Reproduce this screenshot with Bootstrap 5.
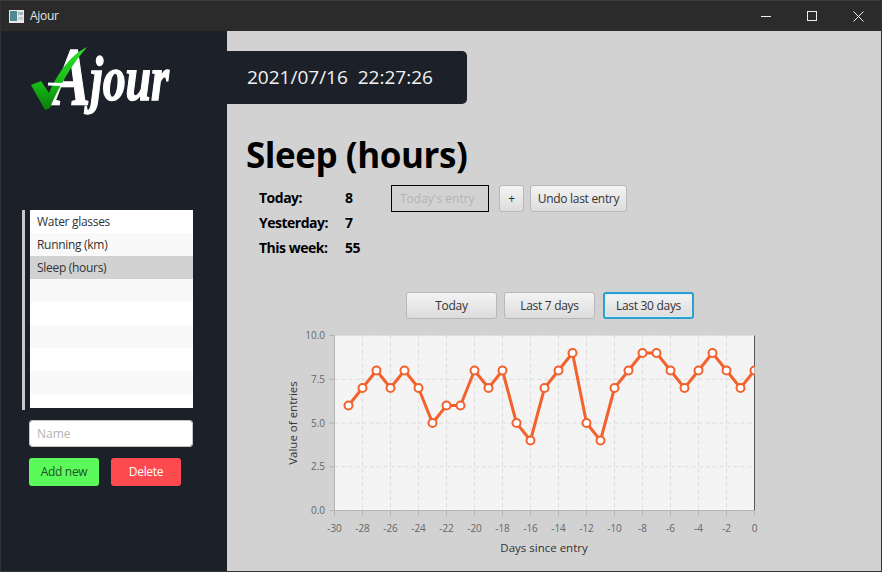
<!DOCTYPE html>
<html lang="en">
<head>
  <meta charset="UTF-8">
  <title>Ajour</title>
  <meta name="viewport" content="width=device-width, initial-scale=1">
  <link href="https://cdn.jsdelivr.net/npm/bootstrap@5.3.3/dist/css/bootstrap.min.css" rel="stylesheet">
  <style>
    html, body {
      height: 100%;
      overflow: hidden;
    }
    body {
      background-color: #d2d2d2;
      font-family: "Open Sans", "Noto Sans", sans-serif;
      font-size: 12px;
      letter-spacing: -0.3px;
      color: #333;
    }
    .app-frame {
      height: 572px;
      width: 882px;
      border: 1px solid #333;
      border-top-color: #3c3c3c;
    }
    .title-bar {
      height: 30px;
      background-color: #2b2b2b;
      color: #e6e6e6;
      padding-left: 8px;
    }
    .title-icon {
      margin-right: 6px;
    }
    .win-btn {
      width: 46px;
      height: 30px;
    }
    .side-panel {
      width: 226px;
      background-color: #1c2028;
    }
    .logo-box {
      height: 178px;
    }
    .list-wrap {
      margin-left: 21px;
      width: 171px;
      border-left: 3px solid #c8c8c8;
      padding-left: 5px;
      height: 200px;
    }
    .metric-list {
      border-radius: 0;
      height: 198px;
      margin-top: 1px;
      background-color: #fff;
      overflow: hidden;
    }
    .metric-list .list-group-item {
      height: 23px;
      flex: none;
      border: 0;
      border-radius: 0;
      padding: 0 7px;
      line-height: 23px;
      color: #333;
      font-size: 12px;
      background-color: #fff;
    }
    .metric-list .list-group-item:nth-child(even) {
      background-color: #f9f9f9;
    }
    .metric-list .list-group-item.is-picked {
      background-color: #d2d2d2;
    }
    .side-form {
      padding-left: 28px;
      padding-top: 10px;
    }
    .name-input {
      width: 164px;
      height: 27px;
      padding: 0 7px;
      font-size: 12px;
      border-radius: 3px;
      border-color: #c4c4c4;
      margin-bottom: 7px;
    }
    .name-input::placeholder, .entry-input::placeholder {
      color: #b4b4b4;
    }
    .side-btn {
      width: 70px;
      height: 28px;
      padding: 0;
      font-size: 12px;
      border: 0;
      border-radius: 3px;
      letter-spacing: -0.3px;
    }
    .side-btn-add {
      background-color: #5afa5a;
      color: #24502a;
      margin-right: 12px;
    }
    .side-btn-del {
      background-color: #fd4a4f;
      color: #fff;
    }
    .clock-box {
      margin-top: 20px;
      width: 240px;
      height: 53px;
      background-color: #1c2028;
      color: #f2f2f2;
      font-size: 19px;
      letter-spacing: 0;
      line-height: 53px;
      padding-left: 20px;
      border-radius: 0 5px 5px 0;
      white-space: pre;
    }
    .page-title {
      font-size: 35px;
      letter-spacing: -0.45px;
      font-weight: 700;
      color: #000;
      margin: 29px 0 0 19px;
      line-height: 44px;
      height: 44px;
    }
    .stat-block {
      margin: 8px 0 0 32px;
    }
    .stat-grid {
      display: grid;
      grid-template-columns: 86px 46px;
      grid-auto-rows: 25px;
      font-size: 14px;
      letter-spacing: -0.5px;
      font-weight: 700;
      color: #000;
      line-height: 25px;
      width: 132px;
    }
    .entry-input {
      width: 98px;
      height: 27px;
      margin: 0 10px 0 0;
      padding: 0 8px;
      font-size: 12px;
      border: 1px solid #000;
      border-radius: 0;
      background-color: transparent;
    }
    .fx-btn {
      height: 27px;
      padding: 0;
      font-size: 12px;
      letter-spacing: -0.3px;
      color: #333;
      border: 1px solid #b8b8b8;
      border-radius: 3px;
      background: linear-gradient(#f4f4f4, #dcdcdc);
    }
    .btn-plus { width: 25px; margin-right: 6px; }
    .btn-undo { width: 97px; }
    .range-row {
      margin-top: 32px;
      padding-left: 179px;
      gap: 7px;
    }
    .btn-range { width: 91px; }
    .btn-range.is-focused {
      margin-left: 1px;
      border: 2px solid #2a9fd0;
      box-shadow: inset 0 0 0 1px #d8eef7;
    }
    .chart-svg {
      display: block;
      margin: 9px 0 0 58px;
    }
    .chart-svg text {
      font-family: "Open Sans", "Noto Sans", sans-serif;
      letter-spacing: 0;
    }
  </style>
</head>
<body>
  <div class="app-frame d-flex flex-column">
    <div class="title-bar d-flex align-items-center">
      <svg class="title-icon" width="15" height="13" viewBox="0 0 15 13">
        <rect x="0" y="0" width="15" height="13" fill="#e8e8e8"/>
        <rect x="1" y="1" width="7" height="10" fill="#4f8a90"/>
        <rect x="9" y="2" width="5" height="3" fill="#9fb8c0"/>
        <rect x="9" y="7" width="5" height="3" fill="#c4ccd0"/>
      </svg>
      <span>Ajour</span>
      <div class="ms-auto d-flex">
        <div class="win-btn d-flex align-items-center justify-content-center">
          <svg width="11" height="11" viewBox="0 0 11 11"><path d="M0 5.5H10" stroke="#eee" fill="none"/></svg>
        </div>
        <div class="win-btn d-flex align-items-center justify-content-center">
          <svg width="11" height="11" viewBox="0 0 11 11"><rect x="0.5" y="0.5" width="9" height="9" stroke="#eee" fill="none"/></svg>
        </div>
        <div class="win-btn d-flex align-items-center justify-content-center">
          <svg width="11" height="11" viewBox="0 0 11 11"><path d="M0.5 0.5L10.5 10.5M10.5 0.5L0.5 10.5" stroke="#eee" fill="none"/></svg>
        </div>
      </div>
    </div>

    <div class="d-flex flex-grow-1">
      <div class="side-panel flex-shrink-0">
        <div class="logo-box">
          <svg width="226" height="120" viewBox="1 31 226 120">
            <defs>
              <linearGradient id="tickFill" x1="0" y1="0" x2="0" y2="1">
                <stop offset="0" stop-color="#2fe02f"/>
                <stop offset="0.6" stop-color="#16b816"/>
                <stop offset="1" stop-color="#0a7d0a"/>
              </linearGradient>
            </defs>
            <text transform="translate(51 104) scale(.72 1)" font-family="Liberation Serif" font-style="italic" font-weight="700" font-size="82" fill="#fff" stroke="#fff" stroke-width="1.4">A<tspan dy="-4" font-size="64">jour</tspan></text>
            <path d="M31 85L41 81L49 93C58 72 72 54 87 47C72 64 58 88 50 108L45 110Z" fill="url(#tickFill)"/>
            <path d="M48 84L76 85" stroke="#fff" stroke-width="3" fill="none"/>
          </svg>
        </div>
        <div class="list-wrap">
          <ul class="list-group metric-list">
            <li class="list-group-item">Water glasses</li>
            <li class="list-group-item">Running (km)</li>
            <li class="list-group-item is-picked">Sleep (hours)</li>
            <li class="list-group-item"></li>
            <li class="list-group-item"></li>
            <li class="list-group-item"></li>
            <li class="list-group-item"></li>
            <li class="list-group-item"></li>
            <li class="list-group-item"></li>
          </ul>
        </div>
        <div class="side-form">
          <input class="form-control name-input" placeholder="Name">
          <div class="d-flex pt-1">
            <button class="btn side-btn side-btn-add">Add new</button>
            <button class="btn side-btn side-btn-del">Delete</button>
          </div>
        </div>
      </div>

      <div class="flex-grow-1">
        <div class="clock-box">2021/07/16  22:27:26</div>
        <h1 class="page-title">Sleep (hours)</h1>
        <div class="stat-block d-flex align-items-start">
          <div class="stat-grid">
            <div>Today:</div><div>8</div>
            <div>Yesterday:</div><div>7</div>
            <div>This week:</div><div>55</div>
          </div>
          <input class="form-control entry-input" placeholder="Today's entry">
          <button class="btn fx-btn btn-plus">+</button>
          <button class="btn fx-btn btn-undo">Undo last entry</button>
        </div>
        <div class="d-flex range-row">
          <button class="btn fx-btn btn-range">Today</button>
          <button class="btn fx-btn btn-range">Last 7 days</button>
          <button class="btn fx-btn btn-range is-focused">Last 30 days</button>
        </div>
        <svg id="chart" class="chart-svg" width="485" height="232" viewBox="285 328 485 232"></svg>
      </div>
    </div>
  </div>

  <script src="https://cdn.jsdelivr.net/npm/bootstrap@5.3.3/dist/js/bootstrap.bundle.min.js"></script>
  <script>
    // last 30 days, oldest first, x = -29 .. 0
    const values = [6,7,8,7,8,7,5,6,6,8,7,8,5,4,7,8,9,5,4,7,8,9,9,8,7,8,9,8,7,8];
    const left = 334.5, right = 754.5, top_ = 335.5, bottom = 510.5;
    const px = d => left + (d + 30) * 14;
    const py = v => bottom - v * 17.5;
    let out = '';

    out += `<rect x="${left}" y="${top_}" width="420" height="175" fill="#f4f4f4"/>`;
    for (let d = -28; d <= 0; d += 2) {
      out += `<line x1="${px(d)}" x2="${px(d)}" y1="${top_}" y2="${bottom}" stroke="#dcdcdc" stroke-dasharray="4 3"/>`;
    }
    for (let v = 2.5; v <= 10; v += 2.5) {
      out += `<line x1="${left}" x2="${right}" y1="${py(v)}" y2="${py(v)}" stroke="#dcdcdc" stroke-dasharray="4 3"/>`;
    }
    // axes and ticks
    out += `<line x1="${left}" x2="${left}" y1="${top_}" y2="${bottom}" stroke="#b4b4b4"/>`;
    out += `<line x1="${right}" x2="${right}" y1="${top_}" y2="${bottom}" stroke="#555"/>`;
    out += `<line x1="${left}" x2="${right}" y1="${bottom}" y2="${bottom}" stroke="#b4b4b4"/>`;
    for (let d = -30; d <= 0; d += 0.4) {
      const major = Math.abs(d / 2 - Math.round(d / 2)) < 0.01;
      out += `<line x1="${px(d)}" x2="${px(d)}" y1="${bottom}" y2="${bottom + (major ? 5 : 3)}" stroke="${major ? '#b4b4b4' : '#ccc'}"/>`;
    }
    for (let v = 0; v <= 10.01; v += 0.5) {
      const major = Math.abs(v / 2.5 - Math.round(v / 2.5)) < 0.01;
      out += `<line x1="${left - (major ? 5 : 3)}" x2="${left}" y1="${py(v)}" y2="${py(v)}" stroke="${major ? '#b4b4b4' : '#ccc'}"/>`;
    }
    for (let d = -30; d <= 0; d += 2) {
      out += `<text x="${px(d)}" y="532" font-size="10" fill="#666" text-anchor="middle">${d}</text>`;
    }
    for (let v = 0; v <= 10; v += 2.5) {
      out += `<text x="325" y="${py(v) + 3.5}" font-size="10" fill="#666" text-anchor="end">${v.toFixed(1)}</text>`;
    }
    out += `<text x="544" y="552" font-size="11.5" fill="#333" text-anchor="middle">Days since entry</text>`;
    out += `<text transform="translate(297 423) rotate(-90)" font-size="11.5" fill="#333" text-anchor="middle">Value of entries</text>`;

    // series, clipped at the plot's right edge
    out += `<clipPath id="plotClip"><rect x="${left}" y="${top_ - 2}" width="420" height="180"/></clipPath>`;
    const pts = values.map((v, i) => `${px(i - 29)},${py(v)}`).join(' ');
    out += `<g clip-path="url(#plotClip)"><polyline points="${pts}" fill="none" stroke="#f3622d" stroke-width="3" stroke-linejoin="round"/>`;
    values.forEach((v, i) => {
      out += `<circle cx="${px(i - 29)}" cy="${py(v)}" r="4" fill="#fff" stroke="#f3622d" stroke-width="2"/>`;
    });
    out += '</g>';
    document.getElementById('chart').innerHTML = out;
  </script>
</body>
</html>
